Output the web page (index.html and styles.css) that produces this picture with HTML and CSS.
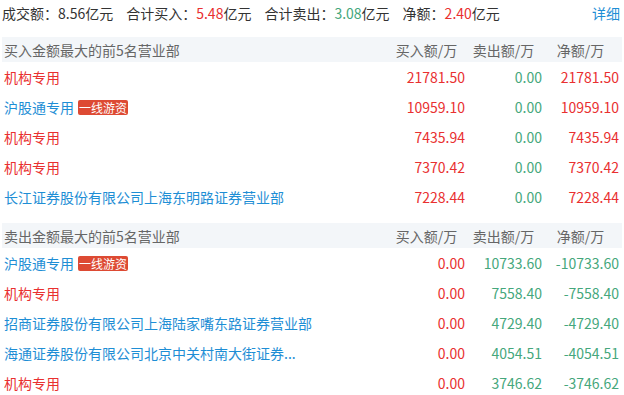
FILE: index.html
```html
<!DOCTYPE html>
<html lang="zh-CN">
<head>
<meta charset="utf-8">
<link rel="stylesheet" href="styles.css">
</head>
<body>
<div class="panel">
  <div class="summary">
    <span class="item">成交额：8.56亿元</span>
    <span class="item">合计买入：<span class="up">5.48</span>亿元</span>
    <span class="item">合计卖出：<span class="down">3.08</span>亿元</span>
    <span class="item">净额：<span class="up">2.40</span>亿元</span>
    <a class="more">详细</a>
  </div>

  <div class="section">
    <div class="row head">
      <div class="name">买入金额最大的前5名营业部</div>
      <div class="col">买入额/万</div>
      <div class="col">卖出额/万</div>
      <div class="col">净额/万</div>
    </div>
    <div class="row"><div class="name up">机构专用</div><div class="num up">21781.50</div><div class="num down">0.00</div><div class="num up">21781.50</div></div>
    <div class="row"><div class="name link">沪股通专用<span class="tag">一线游资</span></div><div class="num up">10959.10</div><div class="num down">0.00</div><div class="num up">10959.10</div></div>
    <div class="row"><div class="name up">机构专用</div><div class="num up">7435.94</div><div class="num down">0.00</div><div class="num up">7435.94</div></div>
    <div class="row"><div class="name up">机构专用</div><div class="num up">7370.42</div><div class="num down">0.00</div><div class="num up">7370.42</div></div>
    <div class="row"><div class="name link">长江证券股份有限公司上海东明路证券营业部</div><div class="num up">7228.44</div><div class="num down">0.00</div><div class="num up">7228.44</div></div>
  </div>

  <div class="section">
    <div class="row head">
      <div class="name">卖出金额最大的前5名营业部</div>
      <div class="col">买入额/万</div>
      <div class="col">卖出额/万</div>
      <div class="col">净额/万</div>
    </div>
    <div class="row"><div class="name link">沪股通专用<span class="tag">一线游资</span></div><div class="num up">0.00</div><div class="num down">10733.60</div><div class="num down">-10733.60</div></div>
    <div class="row"><div class="name up">机构专用</div><div class="num up">0.00</div><div class="num down">7558.40</div><div class="num down">-7558.40</div></div>
    <div class="row"><div class="name link">招商证券股份有限公司上海陆家嘴东路证券营业部</div><div class="num up">0.00</div><div class="num down">4729.40</div><div class="num down">-4729.40</div></div>
    <div class="row"><div class="name link">海通证券股份有限公司北京中关村南大街证券...</div><div class="num up">0.00</div><div class="num down">4054.51</div><div class="num down">-4054.51</div></div>
    <div class="row"><div class="name up">机构专用</div><div class="num up">0.00</div><div class="num down">3746.62</div><div class="num down">-3746.62</div></div>
  </div>
</div>
</body>
</html>
```

FILE: styles.css
```css
* { box-sizing: border-box; }
html, body { margin: 0; padding: 0; background: #fff; }
body {
  font-family: "Microsoft YaHei", "Noto Sans CJK SC", sans-serif;
  font-size: 14px;
  color: #333;
}
.panel { width: 624px; padding: 0 2px; }
.summary {
  display: flex;
  align-items: center;
  height: 25px;
  margin-bottom: 12px;
}
.summary .item { margin-right: 13px; white-space: nowrap; }
.summary .more { margin-left: auto; margin-right: 2px; color: #1e8ed5; cursor: pointer; }
.up { color: #e93030; }
.down { color: #45a77c; }
.link { color: #1e8ed5; }
.section { margin-bottom: 11px; }
.row {
  display: grid;
  grid-template-columns: 1fr 77px 77px 77px;
  align-items: center;
  height: 30px;
  padding: 0 3px 0 2px;
  white-space: nowrap;
}
.row.head {
  height: 25px;
  background: #f3f6f9;
  color: #666;
}
.row.head .col { text-align: center; }
.num { text-align: right; }
.name { display: flex; align-items: center; overflow: hidden; }
.tag {
  display: inline-block;
  margin-left: 4px;
  padding: 0 1px;
  height: 15px;
  line-height: 15px;
  font-size: 12px;
  color: #fff;
  background: #dd4a33;
  border-radius: 2px;
}
```
